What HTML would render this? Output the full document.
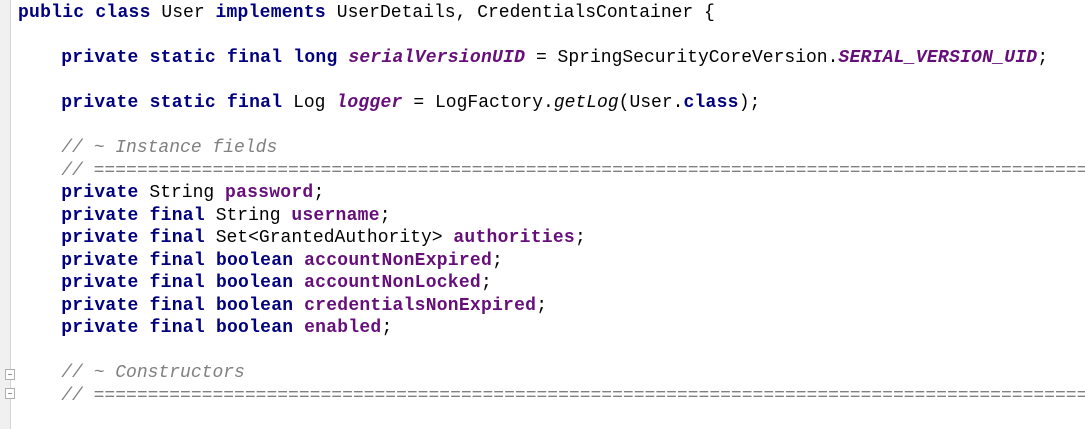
<!DOCTYPE html>
<html><head><style>
html,body{margin:0;padding:0;background:#fff;width:1085px;height:429px;overflow:hidden}
.g{position:absolute;left:0;top:0;width:10px;height:429px;background:#f0f0f0;border-right:1px solid #d4d4d4}
pre{position:absolute;left:18px;top:2px;margin:0;font-family:"Liberation Mono",monospace;font-size:18px;line-height:22.5px;color:#000;white-space:pre}
b{color:#000080;font-weight:bold;letter-spacing:0.25px}
.f{color:#660e7a;font-weight:bold;letter-spacing:0.25px}
.s{color:#660e7a;font-weight:bold;font-style:italic;letter-spacing:0.25px}
.m{font-style:italic}
.c{color:#808080;font-style:italic}
.fold{position:absolute;left:5px;width:10px;height:11px;border:1px solid #b0b0b0;background:#fff;box-sizing:border-box}
.fold:after{content:"";position:absolute;left:2px;top:4px;width:4px;height:1px;background:#999}
</style></head><body>
<div class="g"></div>
<div class="fold" style="top:369px"></div>
<div class="fold" style="top:388px"></div>
<pre><b>public class</b> User <b>implements</b> UserDetails, CredentialsContainer {

    <b>private static final long</b> <span class="s">serialVersionUID</span> = SpringSecurityCoreVersion.<span class="s">SERIAL_VERSION_UID</span>;

    <b>private static final</b> Log <span class="s">logger</span> = LogFactory.<span class="m">getLog</span>(User.<b>class</b>);

    <span class="c">// ~ Instance fields</span>
    <span class="c">// ================================================================================================</span>
    <b>private</b> String <span class="f">password</span>;
    <b>private final</b> String <span class="f">username</span>;
    <b>private final</b> Set&lt;GrantedAuthority&gt; <span class="f">authorities</span>;
    <b>private final boolean</b> <span class="f">accountNonExpired</span>;
    <b>private final boolean</b> <span class="f">accountNonLocked</span>;
    <b>private final boolean</b> <span class="f">credentialsNonExpired</span>;
    <b>private final boolean</b> <span class="f">enabled</span>;

    <span class="c">// ~ Constructors</span>
    <span class="c">// ================================================================================================</span>
</pre>
</body></html>
